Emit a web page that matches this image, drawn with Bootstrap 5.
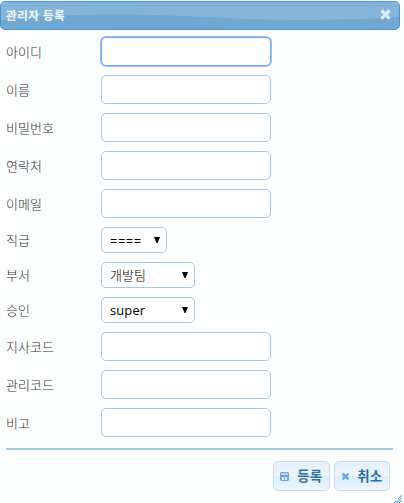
<!DOCTYPE html>
<html lang="ko">
<head>
<meta charset="utf-8">
<meta name="viewport" content="width=device-width, initial-scale=1">
<title>관리자 등록</title>
<link href="https://cdn.jsdelivr.net/npm/bootstrap@5.3.0/dist/css/bootstrap.min.css" rel="stylesheet">
<style>
body{background:#fcfefe;font-family:"Open Sans","Noto Sans CJK KR",sans-serif;font-size:13px;line-height:1;color:#303030;overflow:hidden}
.dialog{width:400px;height:503px;padding-top:1px}
.titlebar{height:29px;border:1px solid #4297d7;border-radius:5px;background:#71a8d2;color:#fff;padding:0 8px 0 5px;overflow:hidden}
.gloss{left:0;top:0;width:100%;height:100%}
.titlebar h1{font-size:11.5px;font-weight:700;line-height:29px;letter-spacing:.55px;color:#f4f9fd}
.close-x{width:11px;height:11px;margin-top:-3px}
.fields{padding:7px 0 0 6px;gap:9px}
.fields label{width:95px;font-weight:300;padding-top:2px}
.fields label.pick-label{padding-top:0}
.field{width:170px;height:29px;padding:0 8px;border:1px solid #a6c9e2;border-radius:5px;background:#fff;outline:0;font-size:13px}
.field:focus,.field.current{border-color:#76a3ee;box-shadow:0 0 0 1px #a3c1f7}
.pick{height:26px;border:1px solid #a6c9e2;border-radius:5px;background:#fff;color:#000;font-size:13px;padding:0 6px 0 8px}
.pick span{line-height:24px;letter-spacing:.1px}
.pick .hangul{font-weight:300}
.pick .equals{letter-spacing:.5px;padding-top:1px}
.pick svg{width:6px;height:6px;margin-top:-1px}
.w-s{width:66px}.w-m{width:94px}
.rule{height:2px;background:#a6c9e2;margin:11px 7px 0 6px}
.actions{gap:4px;padding:11px 10px 0 0}
.action{height:30px;border:1px solid #c5dbec;border-radius:5px;background:linear-gradient(#e4f0fb 0,#edf5fd 48%,#dfeffc 52%,#eaf4fd 100%);color:#2e6e9e;font-size:13.4px;font-weight:600;line-height:28px;padding:0 7px 0 6px}
.action svg{width:9px;height:9px}
.w-save{width:57px}.w-cancel{width:56px}
.grip{right:1px;bottom:0;width:9px;height:9px}
</style>
<script src="https://cdn.jsdelivr.net/npm/bootstrap@5.3.0/dist/js/bootstrap.bundle.min.js"></script>
</head>
<body>
<main class="dialog">
  <header class="titlebar position-relative d-flex align-items-center justify-content-between">
    <svg class="gloss position-absolute" viewBox="0 0 398 27" preserveAspectRatio="none"><defs><linearGradient id="g" x2="0" y2="1"><stop stop-color="#83b3d9"/><stop offset="1" stop-color="#88b6db"/></linearGradient></defs><path fill="url(#g)" d="M0 0H398V15C370 17 330 18 300 18C240 18 190 13 130 12.5C80 12 30 14 0 18Z"/></svg>
    <h1 class="m-0 position-relative">관리자 등록</h1>
    <svg class="close-x position-relative" viewBox="0 0 11 11"><path d="M2.6 2.6L8.4 8.4M8.4 2.6L2.6 8.4" stroke="#dfebf6" stroke-width="3.2" stroke-linecap="square"/></svg>
  </header>
  <form class="fields d-flex flex-column">
    <div class="d-flex align-items-center"><label for="f1">아이디</label><input id="f1" class="field current"></div>
    <div class="d-flex align-items-center"><label for="f2">이름</label><input id="f2" class="field"></div>
    <div class="d-flex align-items-center"><label for="f3">비밀번호</label><input id="f3" type="password" class="field"></div>
    <div class="d-flex align-items-center"><label for="f4">연락처</label><input id="f4" class="field"></div>
    <div class="d-flex align-items-center"><label for="f5">이메일</label><input id="f5" class="field"></div>
    <div class="d-flex align-items-center"><label class="pick-label" for="s1">직급</label><button id="s1" type="button" class="pick w-s d-flex align-items-center justify-content-between"><span class="equals">====</span><svg viewBox="0 0 6 6"><path d="M0 0H6L3.5 6H2.5Z"/></svg></button></div>
    <div class="d-flex align-items-center"><label class="pick-label" for="s2">부서</label><button id="s2" type="button" class="pick w-m d-flex align-items-center justify-content-between"><span class="hangul">개발팀</span><svg viewBox="0 0 6 6"><path d="M0 0H6L3.5 6H2.5Z"/></svg></button></div>
    <div class="d-flex align-items-center"><label class="pick-label" for="s3">승인</label><button id="s3" type="button" class="pick w-m d-flex align-items-center justify-content-between"><span>super</span><svg viewBox="0 0 6 6"><path d="M0 0H6L3.5 6H2.5Z"/></svg></button></div>
    <div class="d-flex align-items-center"><label for="f6">지사코드</label><input id="f6" class="field"></div>
    <div class="d-flex align-items-center"><label for="f7">관리코드</label><input id="f7" class="field"></div>
    <div class="d-flex align-items-center"><label for="f8">비고</label><input id="f8" class="field"></div>
  </form>
  <div class="rule"></div>
  <div class="actions d-flex justify-content-end">
    <button type="button" class="action w-save d-flex align-items-center justify-content-between"><svg viewBox="0 0 9 9"><path fill="#6da8d5" d="M1 0H8L9 1V8L8 9H1L0 8V1Z"/><path fill="#b5d3eb" d="M1 1H8V3H1Z"/><path fill="#e4f1fc" d="M2 5H4V8H2ZM5 5H7V8H5Z"/></svg><span>등록</span></button>
    <button type="button" class="action w-cancel d-flex align-items-center justify-content-between"><svg viewBox="0 0 9 9"><path d="M2.4 2.4L6.6 6.6M6.6 2.4L2.4 6.6" stroke="#6da8d5" stroke-width="2.5" stroke-linecap="square"/></svg><span>취소</span></button>
  </div>
  <svg class="grip position-fixed" viewBox="0 0 9 9"><path d="M0 9L8 1M2.5 9L8 3.5M5 9L8 6" stroke="#4a9bd9" stroke-width="1.2" stroke-dasharray="1.2 .6"/></svg>
</main>
</body>
</html>
